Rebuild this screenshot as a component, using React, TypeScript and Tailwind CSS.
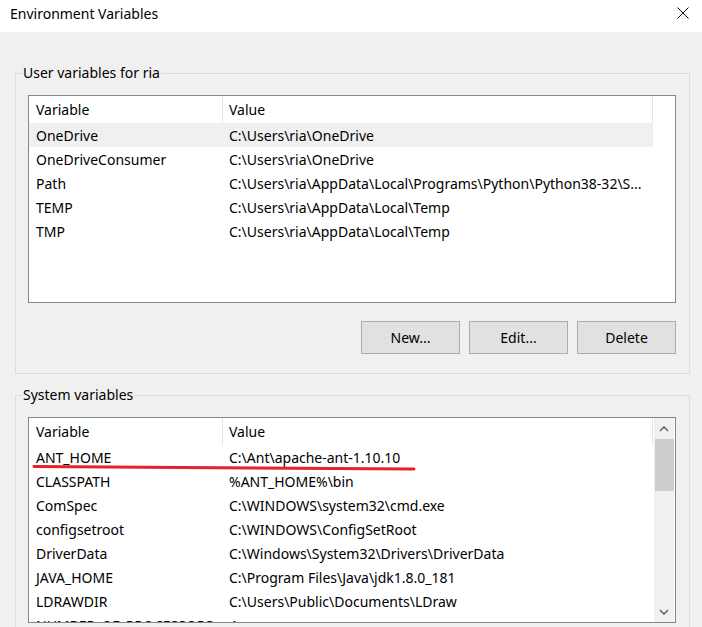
import React from "react";

const userVars = [
  ["OneDrive", "C:\\Users\\ria\\OneDrive"],
  ["OneDriveConsumer", "C:\\Users\\ria\\OneDrive"],
  ["Path", "C:\\Users\\ria\\AppData\\Local\\Programs\\Python\\Python38-32\\S..."],
  ["TEMP", "C:\\Users\\ria\\AppData\\Local\\Temp"],
  ["TMP", "C:\\Users\\ria\\AppData\\Local\\Temp"],
];

const systemVars = [
  ["ANT_HOME", "C:\\Ant\\apache-ant-1.10.10"],
  ["CLASSPATH", "%ANT_HOME%\\bin"],
  ["ComSpec", "C:\\WINDOWS\\system32\\cmd.exe"],
  ["configsetroot", "C:\\WINDOWS\\ConfigSetRoot"],
  ["DriverData", "C:\\Windows\\System32\\Drivers\\DriverData"],
  ["JAVA_HOME", "C:\\Program Files\\Java\\jdk1.8.0_181"],
  ["LDRAWDIR", "C:\\Users\\Public\\Documents\\LDraw"],
  ["NUMBER_OF_PROCESSORS", "4"],
];

function Header() {
  return (
    <div className="flex h-[27px] w-[624px] shrink-0 bg-white">
      <div className="flex w-[194px] items-center border-r border-[#e5e5e5] pl-[7px]">Variable</div>
      <div className="flex w-[430px] items-center border-r border-[#e5e5e5] pl-[6px]">Value</div>
    </div>
  );
}

function Rows({ rows, selected }: { rows: string[][]; selected?: number }) {
  return (
    <>
      {rows.map(([name, value], i) => (
        <div
          key={name}
          className={`flex h-[24px] w-[624px] shrink-0 items-center whitespace-nowrap ${
            i === selected ? "bg-[#f0f0f0]" : ""
          }`}
        >
          <div className="w-[194px] overflow-hidden pl-[7px]">{name}</div>
          <div className="w-[430px] overflow-hidden pl-[6px]">{value}</div>
        </div>
      ))}
    </>
  );
}

function Button({ label }: { label: string }) {
  return (
    <button className="h-[33px] w-[99px] border border-[#adadad] bg-[#e1e1e1] text-black">{label}</button>
  );
}

function Scrollbar() {
  return (
    <div className="flex h-full w-[20px] shrink-0 flex-col items-center bg-[#f0f0f0]">
      <div className="flex h-[21px] items-center justify-center">
        <svg width="10" height="6" viewBox="0 0 10 6">
          <path d="M1 5 L5 1 L9 5" fill="none" stroke="#606060" strokeWidth="1.5" />
        </svg>
      </div>
      <div className="h-[52px] w-[19px] bg-[#cdcdcd]" />
      <div className="flex-1" />
      <div className="flex h-[21px] items-center justify-center">
        <svg width="10" height="6" viewBox="0 0 10 6">
          <path d="M1 1 L5 5 L9 1" fill="none" stroke="#606060" strokeWidth="1.5" />
        </svg>
      </div>
    </div>
  );
}

export default function App() {
  return (
    <div className="h-[627px] w-[702px] overflow-hidden bg-[#f0f0f0] font-[family-name:Noto_Sans,sans-serif] text-[14px] text-black">
      {/* Title bar */}
      <div className="flex h-[32px] items-center justify-between bg-white pb-[6px] pl-[10px] pr-[13px]">
        <span className="text-[14px]">Environment Variables</span>
        <svg width="12" height="12" viewBox="0 0 12 12">
          <path d="M0.5 0.5 L11.5 11.5 M11.5 0.5 L0.5 11.5" stroke="#111" strokeWidth="1" />
        </svg>
      </div>

      {/* User variables */}
      <fieldset className="mt-[31px] ml-[15px] w-[675px] border border-[#dcdcdc] px-[12px] pb-[19px]">
        <legend className="-ml-[6px] px-[1px] leading-[20px]">User variables for ria</legend>
        <div className="mt-[12px] flex h-[208px] w-[648px] flex-col border border-[#828790] bg-white">
          <Header />
          <Rows rows={userVars} selected={0} />
        </div>
        <div className="mt-[18px] flex justify-end gap-[9px] pr-[1px]">
          <Button label="New..." />
          <Button label="Edit..." />
          <Button label="Delete" />
        </div>
      </fieldset>

      {/* System variables */}
      <fieldset className="mt-[11px] ml-[15px] w-[675px] border border-[#dcdcdc] px-[12px] pb-[19px]">
        <legend className="-ml-[6px] px-[1px] leading-[20px]">System variables</legend>
        <div className="relative mt-[12px] flex h-[206px] w-[648px] border border-[#828790] bg-white">
          <div className="flex w-[625px] flex-col overflow-hidden">
            <Header />
            <Rows rows={systemVars} />
          </div>
          <Scrollbar />
          <svg className="pointer-events-none absolute left-0 top-0" width="420" height="60">
            <path d="M5 48.5 Q200 49.5 385 51" fill="none" stroke="#e8202a" strokeWidth="3" strokeLinecap="round" />
          </svg>
        </div>
      </fieldset>
    </div>
  );
}
